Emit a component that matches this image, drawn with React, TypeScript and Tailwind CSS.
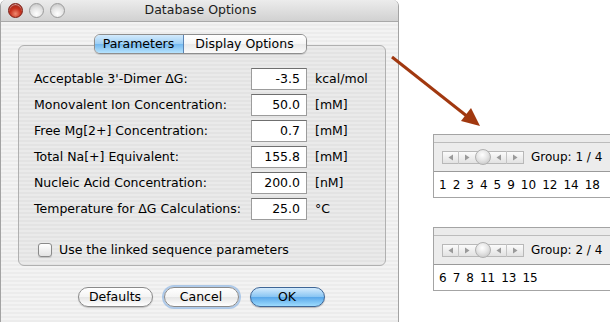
import React from "react";

const font = "font-['DejaVu_Sans','Liberation_Sans',sans-serif]";

function Light({ red }: { red?: boolean }) {
  return (
    <div
      className={
        red
          ? "w-[15px] h-[15px] rounded-full border border-[#7a1a10] bg-[radial-gradient(circle_at_50%_75%,#f08a70_0%,#c8321e_45%,#8a160c_100%)] shadow-[inset_0_1px_1px_rgba(255,255,255,0.6)]"
          : "w-[15px] h-[15px] rounded-full border border-[#9a9a9a] bg-[radial-gradient(circle_at_50%_75%,#ffffff_0%,#e4e4e4_50%,#bdbdbd_100%)]"
      }
    />
  );
}

const rows: [string, string, string][] = [
  ["Acceptable 3'-Dimer ΔG:", "-3.5", "kcal/mol"],
  ["Monovalent Ion Concentration:", "50.0", "[mM]"],
  ["Free Mg[2+] Concentration:", "0.7", "[mM]"],
  ["Total Na[+] Equivalent:", "155.8", "[mM]"],
  ["Nucleic Acid Concentration:", "200.0", "[nM]"],
  ["Temperature for ΔG Calculations:", "25.0", "°C"],
];

function Tri({ dir }: { dir: "l" | "r" }) {
  return (
    <svg width="6" height="7" viewBox="0 0 6 7">
      {dir === "l" ? (
        <polygon points="5,0.5 5,6.5 0.5,3.5" fill="#9a9a9a" />
      ) : (
        <polygon points="1,0.5 1,6.5 5.5,3.5" fill="#9a9a9a" />
      )}
    </svg>
  );
}

function Stepper() {
  return (
    <div className="relative flex items-center h-[13px] border border-[#b8b8b8] bg-[linear-gradient(#fbfbfb,#e2e2e2)]">
      <div className="w-[16px] h-[13px] flex items-center justify-center border-r border-[#c4c4c4]">
        <Tri dir="l" />
      </div>
      <div className="w-[16px] h-[13px] flex items-center justify-center">
        <Tri dir="r" />
      </div>
      <div className="w-[16px] h-[16px] -my-[2px] rounded-full border border-[#b0b0b0] bg-[radial-gradient(circle_at_45%_35%,#ffffff_0%,#e6e6e6_45%,#bcbcbc_100%)]" />
      <div className="w-[16px] h-[13px] flex items-center justify-center border-r border-[#c4c4c4]">
        <Tri dir="l" />
      </div>
      <div className="w-[16px] h-[13px] flex items-center justify-center">
        <Tri dir="r" />
      </div>
    </div>
  );
}

function Panel({ group, nums }: { group: string; nums: string[] }) {
  return (
    <div className="flex flex-col border-l border-t border-b border-[#a4a4a4]">
      <div className="h-[8px] bg-[#ebebeb] border-b border-[#bcbcbc]" />
      <div className="h-[29px] bg-[#ececec] border-b border-[#9a9a9a] flex items-center pl-[8px] gap-[7px]">
        <Stepper />
        <span className="text-[12px] text-black whitespace-pre">{`Group: ${group}`}</span>
      </div>
      <div className="h-[25px] bg-white flex items-center pl-[5px] gap-[6px] text-[12px] text-black">
        {nums.map((n) => (
          <span key={n}>{n}</span>
        ))}
      </div>
    </div>
  );
}

function Btn({ children, kind }: { children: React.ReactNode; kind?: "ok" | "focus" }) {
  const base =
    "w-[75px] h-[20px] rounded-full flex items-center justify-center text-[12.5px] text-black";
  if (kind === "ok")
    return (
      <div
        className={`${base} border border-[#3f6696] bg-[linear-gradient(#d4ebfd_0%,#8ac6f3_48%,#5aa8ea_52%,#9ddbfd_100%)] shadow-[0_1px_1px_rgba(0,0,0,0.25)]`}
      >
        {children}
      </div>
    );
  return (
    <div
      className={`${base} border border-[#8a8a8a] bg-[linear-gradient(#ffffff_0%,#f4f4f4_48%,#e6e6e6_52%,#ffffff_100%)] ${
        kind === "focus" ? "shadow-[0_0_0_2px_rgba(120,170,225,0.55)]" : "shadow-[0_1px_1px_rgba(0,0,0,0.2)]"
      }`}
    >
      {children}
    </div>
  );
}

export default function App() {
  return (
    <div className={`relative w-[610px] h-[322px] bg-white overflow-hidden flex ${font}`}>
      {/* Window */}
      <div className="w-[399px] h-[322px] flex flex-col border-x border-[#a3a3a3] rounded-t-[6px] overflow-hidden bg-[repeating-linear-gradient(180deg,#ececec_0px,#ececec_2px,#f3f3f3_2px,#f3f3f3_4px)]">
        {/* title bar */}
        <div className="relative h-[22px] shrink-0 flex items-center border-b border-[#a9a9a9] bg-[linear-gradient(#ececec,#d1d1d1)]">
          <div className="flex items-center gap-[6px] pl-[7px]">
            <Light red />
            <Light />
            <Light />
          </div>
          <div className="flex-1 text-center text-[12.5px] text-[#1c1c1c] pr-[62px]">Database Options</div>
        </div>

        {/* content */}
        <div className="flex flex-col pt-[12px]">
          <div className="relative z-10 flex justify-center pl-[1px]">
            <div className="flex h-[20px] rounded-[6px] border border-[#8e8e8e] overflow-hidden shadow-[0_1px_1px_rgba(0,0,0,0.15)]">
              <div className="w-[89px] flex items-center justify-center text-[12.5px] text-black border-r border-[#5b84b4] bg-[linear-gradient(#d3eafc_0%,#9fd0f5_48%,#74b9ef_52%,#b7e3fd_100%)]">
                Parameters
              </div>
              <div className="w-[122px] flex items-center justify-center text-[12.5px] text-black bg-[linear-gradient(#ffffff_0%,#f6f6f6_48%,#e9e9e9_52%,#fbfbfb_100%)]">
                Display Options
              </div>
            </div>
          </div>

          <div className="ml-[17px] w-[368px] h-[221px] -mt-[9px] rounded-[6px] border border-[#b0b0b0] bg-[rgba(0,0,0,0.035)] pt-[22px] pl-[15px]">
            <div className="flex flex-col gap-[4px]">
              {rows.map(([l, v, u]) => (
                <div key={l} className="flex items-center h-[22px]">
                  <div className="w-[217px] text-[12.5px] text-black">{l}</div>
                  <div className="w-[56px] h-[22px] bg-white border border-[#9c9c9c] border-t-[#6f6f6f] flex items-center justify-end pr-[6px] text-[12.5px] text-black">
                    {v}
                  </div>
                  <div className="ml-[8px] text-[12.5px] text-black">{u}</div>
                </div>
              ))}
            </div>
            <div className="flex items-center mt-[21px] ml-[4px] gap-[7px]">
              <div className="w-[14px] h-[14px] rounded-[3px] border border-[#8a8a8a] bg-[linear-gradient(#ffffff,#e3e3e3)] shadow-[0_1px_1px_rgba(0,0,0,0.15)]" />
              <span className="text-[12.5px] text-black">Use the linked sequence parameters</span>
            </div>
          </div>

          <div className="flex justify-center gap-[11px] mt-[21px] pl-[3px]">
            <Btn>Defaults</Btn>
            <Btn kind="focus">Cancel</Btn>
            <Btn kind="ok">OK</Btn>
          </div>
        </div>
      </div>

      {/* right side panels */}
      <div className="flex-1 flex flex-col pl-[34px] pt-[134px] gap-[29px]">
        <Panel group="1 / 4" nums={["1", "2", "3", "4", "5", "9", "10", "12", "14", "18"]} />
        <Panel group="2 / 4" nums={["6", "7", "8", "11", "13", "15"]} />
      </div>

      {/* arrow */}
      <svg className="absolute left-0 top-0 pointer-events-none" width="610" height="322">
        <line x1="392" y1="57" x2="468" y2="117" stroke="#a1380f" strokeWidth="3" />
        <polygon points="480,126 461,121 471,108" fill="#a1380f" />
      </svg>
    </div>
  );
}
